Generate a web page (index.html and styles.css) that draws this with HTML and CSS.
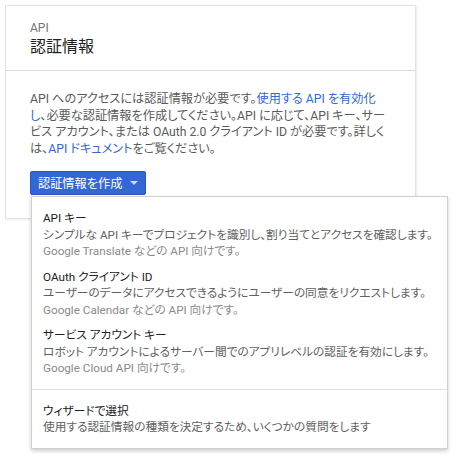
FILE: index.html
```html
<!DOCTYPE html>
<html lang="ja">
<head>
<meta charset="utf-8">
<link rel="stylesheet" href="styles.css">
</head>
<body>
<div class="card">
  <div class="card-head">
    <div class="eyebrow">API</div>
    <div class="title">認証情報</div>
  </div>
  <div class="card-body">
    <p class="intro">API へのアクセスには認証情報が必要です。<a class="link">使用する API を有効化</a><br><a class="link">し</a>、必要な認証情報を作成してください。API に応じて、API キー、サー<br>ビス アカウント、または OAuth 2.0 クライアント ID が必要です。詳しく<br>は、<a class="link">API ドキュメント</a>をご覧ください。</p>
    <div class="dropdown">
      <button class="btn">認証情報を作成<span class="caret"></span></button>
      <div class="menu">
        <div class="section">
          <div class="item">
            <div class="item-title">API キー</div>
            <div class="item-desc">シンプルな API キーでプロジェクトを識別し、割り当てとアクセスを確認します。</div>
            <div class="item-note">Google Translate などの API 向けです。</div>
          </div>
          <div class="item">
            <div class="item-title">OAuth クライアント ID</div>
            <div class="item-desc">ユーザーのデータにアクセスできるようにユーザーの同意をリクエストします。</div>
            <div class="item-note">Google Calendar などの API 向けです。</div>
          </div>
          <div class="item">
            <div class="item-title">サービス アカウント キー</div>
            <div class="item-desc">ロボット アカウントによるサーバー間でのアプリレベルの認証を有効にします。</div>
            <div class="item-note">Google Cloud API 向けです。</div>
          </div>
        </div>
        <div class="section">
          <div class="item">
            <div class="item-title">ウィザードで選択</div>
            <div class="item-desc">使用する認証情報の種類を決定するため、いくつかの質問をします</div>
          </div>
        </div>
      </div>
    </div>
  </div>
</div>
</body>
</html>
```
FILE: styles.css
```css
html, body {
  margin: 0;
  padding: 0;
  background: #ffffff;
}
body {
  font-family: Roboto, "Noto Sans CJK JP", sans-serif;
  font-feature-settings: "palt";
  color: #212121;
  padding: 5px;
  min-height: 455px;
  box-sizing: border-box;
}
.card {
  width: 409px;
  border: 1px solid #e3e3e3;
  box-shadow: 1px 1px 2px rgba(0,0,0,0.08);
  background: #fff;
}
.card-head {
  padding: 14px 24px 10px 24px;
  height: 40px;
  border-bottom: 1px solid #dadada;
}
.eyebrow {
  font-size: 12px;
  line-height: 16px;
  color: #757575;
}
.title {
  font-size: 16px;
  line-height: 22px;
  color: #212121;
}
.card-body {
  padding: 20px 24px 23px 24px;
}
.intro {
  margin: 0 0 14px 0;
  font-size: 12.2px;
  line-height: 16.5px;
  color: #5a5a5a;
  white-space: nowrap;
}
.link {
  color: #3367d6;
  text-decoration: none;
}
.dropdown {
  position: relative;
  display: inline-block;
}
.btn {
  display: flex;
  align-items: center;
  height: 24px;
  padding: 0 7px 0 7px;
  background: #3367d6;
  border: 1px solid #2a56c6;
  border-radius: 2px;
  color: #fff;
  font-family: inherit;
  font-feature-settings: "palt";
  font-size: 12.2px;
}
.caret {
  margin-left: 8px;
  width: 0;
  height: 0;
  border-left: 4px solid transparent;
  border-right: 4px solid transparent;
  border-top: 4px solid rgba(255,255,255,0.75);
}
.menu {
  position: absolute;
  left: 1px;
  top: 25px;
  width: 415px;
  background: #fff;
  border: 1px solid #d0d0d0;
  box-shadow: 0 2px 4px rgba(0,0,0,0.2);
  z-index: 10;
}
.section {
  padding: 8px 0;
}
.section + .section {
  border-top: 1px solid #e0e0e0;
}
.item {
  padding: 5px 12px 4px 11px;
  font-size: 11.7px;
  line-height: 16.5px;
  white-space: nowrap;
}
.item-title {
  color: #212121;
}
.item-desc {
  color: #616161;
}
.item-note {
  color: #8a8a8a;
}
```
